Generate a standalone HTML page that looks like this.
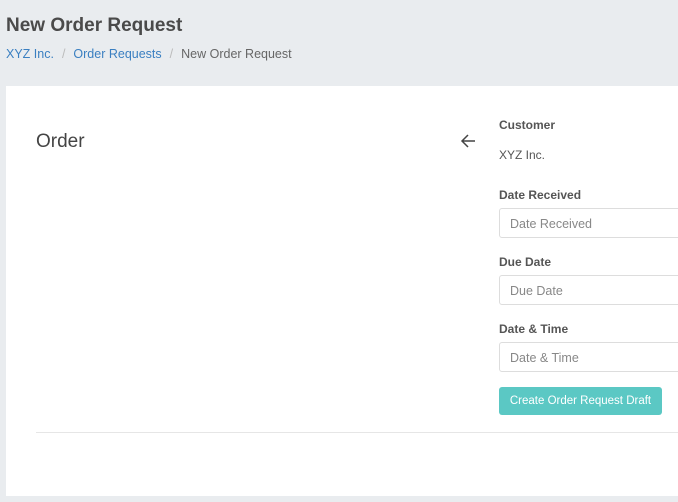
<!DOCTYPE html>
<html><head><style>
body{margin:0;width:678px;height:502px;background:#e9ecef;font-family:"Liberation Sans",sans-serif;position:relative;overflow:hidden;color:#555}
.a{position:absolute;white-space:nowrap}
h1{position:absolute;left:6px;top:15px;margin:0;font-size:19px;font-weight:bold;color:#4a4a4a}
.bc{left:6px;top:47px;font-size:12.5px;color:#666}
.bc span.l{color:#3a7fc1}.bc span.s{color:#bbb;margin:0 8px}
.card{position:absolute;left:6px;top:86px;width:672px;height:410px;background:#fff}
.lab{font-size:12px;font-weight:bold;color:#555;left:499px}
.inp{position:absolute;left:499px;width:185px;height:30px;border:1px solid #ddd;border-radius:3px;box-sizing:border-box;font-size:12.5px;color:#888;padding:8px 0 0 10px}
</style></head><body>
<h1>New Order Request</h1>
<div class="a bc"><span class="l">XYZ Inc.</span><span class="s">/</span><span class="l">Order Requests</span><span class="s">/</span>New Order Request</div>
<div class="card"></div>
<div class="a" style="left:36px;top:131px;font-size:19px;color:#444">Order</div>
<svg class="a" style="left:460px;top:133px" width="16" height="16" viewBox="0 0 16 16"><path d="M15 8H2M8 2L2 8l6 6" stroke="#444" stroke-width="1.5" fill="none"/></svg>
<div class="a lab" style="top:118px">Customer</div>
<div class="a" style="left:499px;top:148px;font-size:12px;color:#555">XYZ Inc.</div>
<div class="a lab" style="top:188px">Date Received</div>
<div class="inp" style="top:208px">Date Received</div>
<div class="a lab" style="top:255px">Due Date</div>
<div class="inp" style="top:275px">Due Date</div>
<div class="a lab" style="top:322px">Date &amp; Time</div>
<div class="inp" style="top:342px">Date &amp; Time</div>
<div class="a" style="left:499px;top:387px;width:163px;height:28px;background:#5bc8c4;border-radius:3px;color:#fff;font-size:11.5px;text-align:center;line-height:28px">Create Order Request Draft</div>
<div class="a" style="left:36px;top:432px;width:642px;height:1px;background:#e6e6e6"></div>
</body></html>
